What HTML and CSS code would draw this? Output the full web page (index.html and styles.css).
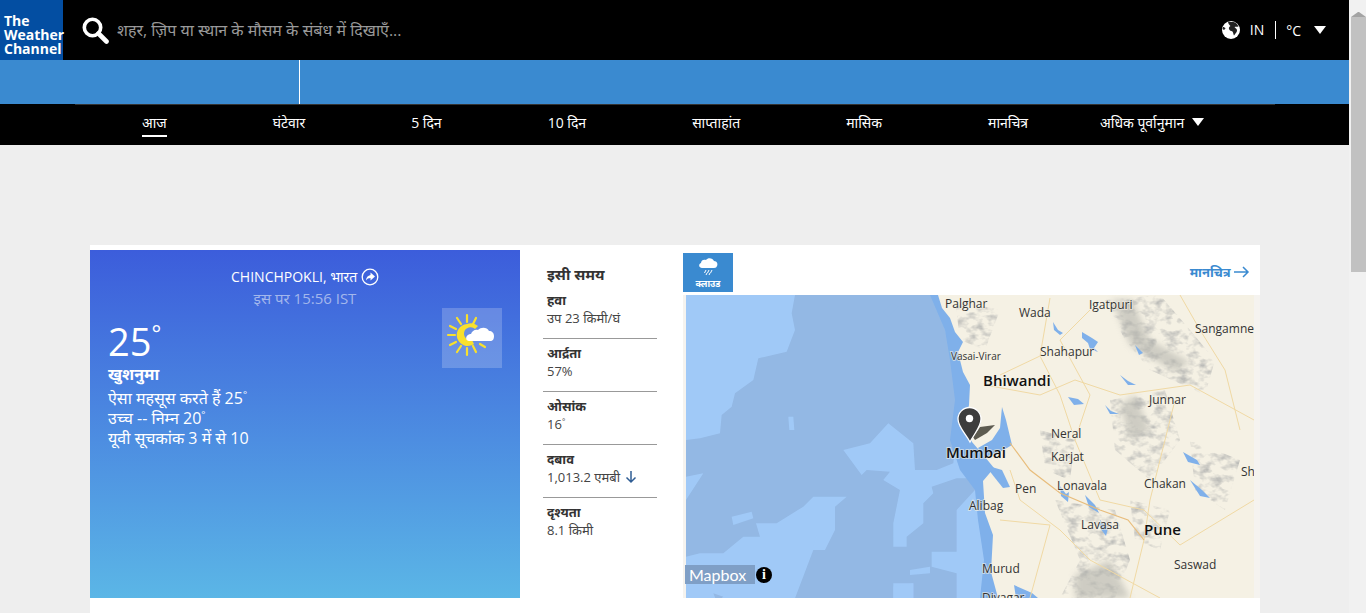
FILE: index.html
```html
<!DOCTYPE html>
<html lang="hi">
<head>
    <meta charset="UTF-8">
    <meta name="viewport" content="width=device-width, initial-scale=1.0">
    <title>The Weather Channel</title>
    <link rel="stylesheet" href="styles.css">
</head>
<body>
<div class="window">
    <div class="page">
        <header class="top-bar">
            <div class="logo">The<br>Weather<br>Channel</div>
            <div class="search">
                <svg class="search-icon" viewBox="0 0 27 27"><circle cx="10.5" cy="10.5" r="8.2" fill="none" stroke="#fff" stroke-width="3.6"/><path d="M16.5 16.5l8 8" stroke="#fff" stroke-width="4.6" stroke-linecap="round"/></svg>
                <span class="search-text">शहर, ज़िप या स्थान के मौसम के संबंध में दिखाएँ...</span>
            </div>
            <div class="locale">
                <svg class="globe" viewBox="0 0 18 18"><circle cx="9" cy="9" r="9" fill="#fff"/><path d="M6 .5C8 1 11 .8 13 1.500c1.500 1 3 2.500 3.500 4-1.500.5-3 0-4 .5 1 1.500 3 2 2.500 4-.5 1.500-2 3-3 4.500-.8-1-.6-3-1.500-4-1.500-.5-3-1-3.500-2.500-.5-1.500.5-2.500 1.500-3C7.500 4 6 2.500 6 .5z" fill="#222"/><path d="M1 6c1 0 2 .5 2.500 1.500L2 9 .5 8z" fill="#222"/></svg>
                <span class="locale-code">IN</span>
                <span class="locale-unit">°C</span>
                <span class="tri"></span>
            </div>
        </header>
        <div class="blue-band"><span class="band-line"></span></div>
        <nav class="nav">
            <a class="nav-item active">आज</a>
            <a class="nav-item">घंटेवार</a>
            <a class="nav-item">5 दिन</a>
            <a class="nav-item">10 दिन</a>
            <a class="nav-item">साप्ताहांत</a>
            <a class="nav-item">मासिक</a>
            <a class="nav-item">मानचित्र</a>
            <a class="nav-item more">अधिक पूर्वानुमान <span class="tri"></span></a>
        </nav>

        <main class="content">
            <section class="card">
                <div class="now-panel">
                    <div class="place">CHINCHPOKLI, भारत
                        <svg class="place-icon" viewBox="0 0 18 18"><circle cx="9" cy="9" r="7.800" fill="none" stroke="#fff" stroke-width="1.300"/><path d="M9.500 4.500l4.500 4-4.500 4V10C7.500 10 6 10.800 5 12.500 5 9.500 7 7.500 9.500 7z" fill="#fff"/></svg>
                    </div>
                    <div class="obs-time">इस पर 15:56 IST</div>
                    <div class="now-row">
                        <div class="now-text">
                            <div class="temp">25<sup>°</sup></div>
                            <div class="phrase">खुशनुमा</div>
                            <div class="now-line">ऐसा महसूस करते हैं 25<sup>°</sup></div>
                            <div class="now-line">उच्च -- निम्न 20<sup>°</sup></div>
                            <div class="now-line">यूवी सूचकांक 3 में से 10</div>
                        </div>
                        <div class="sky-icon">
                            <svg viewBox="0 0 60 60">
                                <g stroke="#f8e02c" stroke-width="2.200" stroke-linecap="round">
                                    <path d="M25 7v7M15 10l4 6M8 18l6 3M6 27h7M8 37l6-3M15 44l4-6M25 47v-7M34 44l-3-6M43 39l-5-3M34 10l-3 6"/>
                                </g>
                                <path d="M25 16a11 11 0 1 0 7 20l-2-4a6.500 6.500 0 1 1 3-11l3-3a11 11 0 0 0-11-2z" fill="#f8e02c"/>
                                <path d="M27 33c-3 0-4-4-1-6 1-1 2-1 3-1 1-3 4-5 7-4 3-3 9-3 11 1 3 0 5 2 5 5 0 3-1 5-4 5z" fill="#fff"/>
                            </svg>
                        </div>
                    </div>
                </div>

                <div class="stats">
                    <h2 class="stats-title">इसी समय</h2>
                    <div class="stat">
                        <div class="stat-label">हवा</div>
                        <div class="stat-value">उप 23 किमी/घं</div>
                    </div>
                    <div class="stat">
                        <div class="stat-label">आर्द्रता</div>
                        <div class="stat-value">57%</div>
                    </div>
                    <div class="stat">
                        <div class="stat-label">ओसांक</div>
                        <div class="stat-value">16<sup>°</sup></div>
                    </div>
                    <div class="stat">
                        <div class="stat-label">दबाव</div>
                        <div class="stat-value">1,013.2 एमबी
                            <svg class="down-arrow" viewBox="0 0 12 14"><path d="M6 1v11M1.500 7.500L6 12l4.500-4.500" fill="none" stroke="#2f5d94" stroke-width="1.500"/></svg>
                        </div>
                    </div>
                    <div class="stat last">
                        <div class="stat-label">दृश्यता</div>
                        <div class="stat-value">8.1 किमी</div>
                    </div>
                </div>

                <div class="map-panel">
                    <div class="map-head">
                        <div class="map-tab">
                            <svg viewBox="0 0 22 20"><path d="M5 11c-3 0-4-4-1-5 0-3 3-4 5-3 2-3 7-2 8 1 3 0 4 3 3 5-.5 1-1 2-3 2z" fill="#fff"/><path d="M9 13l-1.500 3M12 13l-1.500 3M15 13l-1.500 3M10 16l-1 2M13 16l-1 2" stroke="#fff" stroke-width="1"/></svg>
                            <span>क्लाउड</span>
                        </div>
                        <a class="map-link">मानचित्र
                            <svg viewBox="0 0 16 12"><path d="M0 6h14M9 1l5 5-5 5" fill="none" stroke="#3a8ad0" stroke-width="1.500"/></svg>
                        </a>
                    </div>
                    <div class="map">
                        <svg class="map-svg" viewBox="686 295 568 303">
                            <defs>
                                <filter id="grain" x="0" y="0" width="100%" height="100%">
                                    <feTurbulence type="fractalNoise" baseFrequency="0.09 0.13" numOctaves="3" seed="7"/>
                                    <feColorMatrix values="0 0 0 0 .5  0 0 0 0 .5  0 0 0 0 .48  2.600 0 0 0 -1.150"/>
                                    <feComposite in2="SourceAlpha" operator="in"/>
                                </filter>
                                <filter id="soft"><feGaussianBlur stdDeviation="3"/></filter>
                                <filter id="edge"><feGaussianBlur stdDeviation=".6"/></filter>
                            </defs>
                            <rect x="686" y="295" width="568" height="303" fill="#a0c9f7"/>
                            <g transform="translate(680 290) scale(.3333)" filter="url(#edge)">
                                <path fill="#93b8e4" d="M345 15L335 70 345 120 320 185 235 205 220 270 165 310 155 350 125 375 120 430 60 445 18 450V560L70 550 18 630V800L60 790 130 790 190 740 240 740 228 700 290 700 370 650 400 620 500 620 465 650 465 720 435 780H400L345 925H640V880H700V925H830V850L755 830V785H830V660L885 600 890 565H830L755 590 760 610 730 640V700L680 740V770H640V700L660 600 610 570 630 545 560 540 545 555 490 480 570 460 625 400 700 460 705 540H770L820 520 835 380 830 250 790 100 780 15z"/>
                                <path fill="#a0c9f7" d="M155 680l60-15 5 20-60 20zM325 380h15l3 40-15 0zM690 840l60-10v20l-60 5zM640 890l60-10v45h-60zM370 735h40l-10 40-30 0z"/>
                                <path fill="#93b8e4" d="M635 40l20 10-30 30-15-15zM100 910l30 10-20 15z"/>
                            </g>
                            <path fill="#7fb0ea" d="M930 295H952L956 310 962 325 968 340 962 352 968 372 974 385 974 405 970 425 976 442 990 457 998 468 988 481 990 513 998 535 996 572 1002 598H980L984 560 978 520 975 490 960 470 950 440 955 400 950 360 945 330z" filter="url(#edge)"/>
                            <path id="land" fill="#f5f1e4" d="M938 295L942 308 950 318 955 332 963 342 958 352 963 372 970 385 969 405 965 425 972 442 985 457 994 468 983 481 985 513 993 535 991 572 998 598H1254V295z"/>
                            <path fill="#8f8f88" filter="url(#grain)" stroke="#000" stroke-width="0" d="M1105 300L1160 295 1190 330 1215 360 1205 395 1150 370 1125 340zM1110 400L1165 390 1180 440 1150 480 1115 450zM1040 430L1075 440 1070 480 1045 470zM1055 500L1115 510 1130 560 1115 598H1060L1080 560zM955 300L1000 310 985 350 960 340zM1190 440L1240 460 1225 510 1195 490zM1130 500L1170 510 1160 550 1135 540z"/>
                            <path fill="#b5b5ae" opacity=".6" filter="url(#soft)" d="M1112 300L1132 300 1150 340 1190 362 1175 372 1130 345zM1120 405L1135 395 1150 430 1130 440zM1075 575L1110 560 1130 598H1075z"/>
                            <g fill="#7fb0ea">
                                <path d="M1002 407L1006 420 1012 445 1000 452 985 457 978 448 992 440 1000 428z"/>
                                <path d="M985 465L1002 470 1010 487 1003 488 995 478z"/>
                                <path d="M1053 322l5 8 5 3-3 2-6-5zM1082 332l10 6 6 4-4 6 4 4-8-3-2-6-6-5zM1068 397l10 2 6 5-10 1zM1105 405l6 6 8 3-9 0zM1120 375l8 6 8 4-8 0zM1135 345l8 8-4 2zM1190 480l12 10 8 8-10-2zM1183 452l14 8 3 5-12-3zM1060 486l6 8 3-2-1 10-7-6zM1085 495l10 10 4 8-10-6zM1100 520l8 8-2 8-6-8zM1014 585l18 8 6 5h-22z"/>
                            </g>
                            <g fill="none" stroke="#f0d9a4" stroke-width="1">
                                <path d="M985 385L1040 395 1075 380 1120 395 1190 385 1254 420"/>
                                <path d="M1040 356L1060 395 1075 440 1100 500 1144 510 1180 545 1254 500"/>
                                <path d="M1050 298L1040 356 1000 375M1090 310L1060 340 1090 395 1075 440M1180 295L1200 330 1225 370 1240 430"/>
                                <path d="M1175 400L1165 440 1150 500 1144 540 1130 598M1010 470L1020 500 1060 530 1090 560 1160 598M1000 520L1050 525 1030 598"/>
                            </g>
                            <path d="M1010 443L1030 470 1060 493 1100 510 1128 520 1144 540" fill="none" stroke="#e8bd7c" stroke-width="1.200"/>
                            <path d="M973 437L980 427 995 425 987 433 975 440z" fill="#5d5b50"/>
                            <g class="map-labels">
                                <text x="945" y="308">Palghar</text>
                                <text x="1019" y="317">Wada</text>
                                <text x="1089" y="309">Igatpuri</text>
                                <text x="1195" y="333">Sangamne</text>
                                <text class="tiny" x="951" y="360">Vasai-Virar</text>
                                <text x="1040" y="356">Shahapur</text>
                                <text class="big" x="983" y="386">Bhiwandi</text>
                                <text x="1149" y="404">Junnar</text>
                                <text x="1051" y="438">Neral</text>
                                <text x="1051" y="461">Karjat</text>
                                <text class="big" x="946" y="458">Mumbai</text>
                                <text x="1241" y="476">Sh</text>
                                <text x="1144" y="488">Chakan</text>
                                <text x="1057" y="490">Lonavala</text>
                                <text x="1015" y="493">Pen</text>
                                <text x="969" y="510">Alibag</text>
                                <text class="big" x="1144" y="535">Pune</text>
                                <text x="1081" y="529">Lavasa</text>
                                <text x="1174" y="569">Saswad</text>
                                <text x="982" y="573">Murud</text>
                                <text x="982" y="602">Divagar</text>
                            </g>
                            <path d="M970 442C966 434 958 427 958 419a11.500 11.500 0 0 1 23 0C981 427 974 434 970 442z" fill="#3d3d3d" stroke="#fff" stroke-width="1.300"/>
                            <circle cx="969.500" cy="418.500" r="3.700" fill="#fff"/>
                        </svg>
                        <div class="mapbox">
                            <span class="mapbox-word">Mapbox</span>
                            <span class="mapbox-info">i</span>
                        </div>
                    </div>
                </div>
            </section>
        </main>
    </div>
    <aside class="scrollbar">
        <span class="scroll-up"></span>
        <span class="scroll-thumb"></span>
    </aside>
</div>
</body>
</html>
```

FILE: styles.css
```css
html, body {
    margin: 0;
    height: 100%;
    overflow: hidden;
}
body {
    font-family: "Open Sans", "Noto Sans", sans-serif;
    background-color: #eeeeee;
    color: #333;
}
sup {
    font-size: 60%;
    line-height: 0;
}
.window {
    display: flex;
    height: 613px;
}
.page {
    flex: 1;
    min-width: 0;
}

/* scrollbar */
.scrollbar {
    width: 17px;
    box-sizing: border-box;
    padding-left: 2px;
    background-color: #f1f1f1;
    display: flex;
    flex-direction: column;
}
.scroll-up {
    height: 17px;
    box-sizing: border-box;
    border-left: 7px solid transparent;
    border-right: 7px solid transparent;
    border-bottom: 5px solid #a3a3a3;
    border-top: 6px solid transparent;
    width: 15px;
    padding: 0;
    margin-left: 0;
}
.scroll-thumb {
    height: 255px;
    background-color: #c1c1c1;
}

/* header */
.top-bar {
    height: 60px;
    background-color: #000;
    display: flex;
    align-items: center;
}
.logo {
    width: 63px;
    height: 60px;
    box-sizing: border-box;
    padding: 14px 0 0 4px;
    background-color: #034ea2;
    color: #fff;
    font-family: "Open Sans", sans-serif;
    font-weight: 700;
    font-size: 14px;
    line-height: 14px;
}
.search {
    flex: 1;
    display: flex;
    align-items: center;
    padding-left: 19px;
}
.search-icon {
    width: 27px;
    height: 27px;
}
.search-text {
    margin-left: 8px;
    color: #999;
    font-size: 16px;
}
.locale {
    display: flex;
    align-items: center;
    padding-right: 23px;
    color: #fff;
    font-size: 14px;
}
.globe {
    width: 18px;
    height: 18px;
    margin-right: 10px;
}
.locale-code {
    padding-right: 11px;
    border-right: 1px solid #fff;
    line-height: 18px;
}
.locale-unit {
    margin: 0 13px 0 10px;
}
.tri {
    display: inline-block;
    width: 0;
    height: 0;
    border-left: 6.500px solid transparent;
    border-right: 6.500px solid transparent;
    border-top: 8px solid #fff;
}
.blue-band {
    height: 44px;
    background-color: #3a8ad0;
    padding-left: 299px;
}
.band-line {
    display: block;
    width: 1px;
    height: 44px;
    background-color: #fff;
}

/* nav */
.nav {
    height: 41px;
    background-color: #000;
    display: flex;
    align-items: center;
    gap: 106px;
    padding-left: 142px;
    position: relative;
    font-size: 14px;
}
.nav::before {
    content: "";
    position: absolute;
    left: 75px;
    top: 0;
    width: 1200px;
    height: 1px;
    background-color: #333;
}
.nav-item {
    color: #fff;
    line-height: 22px;
    padding-bottom: 1px;
    border-bottom: 2px solid transparent;
}
.nav-item.active {
    border-bottom-color: #fff;
}
.nav-item.more {
    margin-left: -34px;
}
.nav-item.more .tri {
    margin-left: 4px;
    vertical-align: 2px;
}

/* card */
.content {
    padding: 100px 89px 0 90px;
}
.card {
    height: 368px;
    box-sizing: border-box;
    padding-top: 5px;
    background-color: #fff;
    display: flex;
    align-items: flex-start;
}
.now-panel {
    width: 430px;
    height: 348px;
    box-sizing: border-box;
    padding: 16px 18px 0;
    background: linear-gradient(#3c5ddb, #5bb6e6);
    color: #fff;
}
.place {
    text-align: center;
    font-size: 14px;
    line-height: 22px;
}
.place-icon {
    width: 18px;
    height: 18px;
    vertical-align: -4px;
}
.obs-time {
    text-align: center;
    font-size: 15px;
    line-height: 20px;
    color: #a3b7ec;
}
.now-row {
    display: flex;
    justify-content: space-between;
    padding-right: 0;
}
.now-text {
    padding-top: 10px;
}
.temp {
    font-size: 38px;
    line-height: 46px;
}
.phrase {
    font-size: 16px;
    font-weight: 700;
    line-height: 20px;
    margin-bottom: 4px;
}
.now-line {
    font-size: 16px;
    line-height: 20px;
}
.sky-icon {
    width: 60px;
    height: 60px;
    margin-top: 0;
    background-color: rgba(255, 255, 255, 0.2);
}
.sky-icon svg {
    display: block;
}

/* stats column */
.stats {
    width: 114px;
    margin-left: 23px;
    padding-top: 13px;
}
.stats-title {
    margin: 0 0 6px 4px;
    font-size: 15px;
    line-height: 22px;
    color: #333;
}
.stat {
    height: 47px;
    padding: 0 0 0 4px;
    margin-bottom: 5px;
    border-bottom: 1px solid #999;
}
.stat.last {
    border-bottom: none;
}
.stat-label {
    font-size: 13px;
    font-weight: 700;
    line-height: 18px;
    color: #333;
}
.stat-value {
    font-size: 13px;
    line-height: 18px;
    color: #444;
}
.down-arrow {
    width: 12px;
    height: 14px;
    vertical-align: -2px;
    margin-left: 2px;
}

/* map */
.map-panel {
    width: 577px;
    margin-left: 26px;
}
.map-head {
    height: 45px;
    box-sizing: border-box;
    padding: 3px 10px 0 0;
    display: flex;
    justify-content: space-between;
    align-items: flex-start;
}
.map-tab {
    width: 50px;
    height: 39px;
    background-color: #3a8ad0;
    color: #fff;
    font-size: 9px;
    font-weight: 700;
    line-height: 12px;
    text-align: center;
}
.map-tab svg {
    display: block;
    width: 22px;
    height: 20px;
    margin: 4px auto 1px;
}
.map-link {
    margin-top: 9px;
    color: #3a8ad0;
    font-size: 13px;
    font-weight: 700;
    line-height: 20px;
}
.map-link svg {
    width: 16px;
    height: 12px;
    vertical-align: -1px;
}
.map {
    position: relative;
    height: 303px;
    padding: 0 6px 0 3px;
    background-color: #f5f3ef;
}
.map-svg {
    display: block;
    width: 568px;
    height: 303px;
}
.map-labels text {
    font-family: "Open Sans", sans-serif;
    font-size: 12px;
    fill: #333;
    stroke: #f5f1e4;
    stroke-width: 2px;
    stroke-opacity: .6;
    paint-order: stroke;
}
.map-labels .tiny {
    font-size: 10px;
}
.map-labels .big {
    font-size: 15px;
    font-weight: 600;
    fill: #111;
}
.mapbox {
    position: absolute;
    left: 2px;
    bottom: 14px;
    display: flex;
    align-items: center;
}
.mapbox-word {
    width: 70px;
    height: 19px;
    box-sizing: border-box;
    padding-left: 4px;
    background-color: #7f9fc6;
    color: #fff;
    font-family: Lato, sans-serif;
    font-size: 16px;
    line-height: 19px;
}
.mapbox-info {
    width: 16px;
    height: 16px;
    margin-left: 1px;
    border-radius: 50%;
    background-color: #000;
    color: #fff;
    font-family: "Liberation Serif", serif;
    font-weight: 700;
    font-size: 14px;
    line-height: 16px;
    text-align: center;
}
```
